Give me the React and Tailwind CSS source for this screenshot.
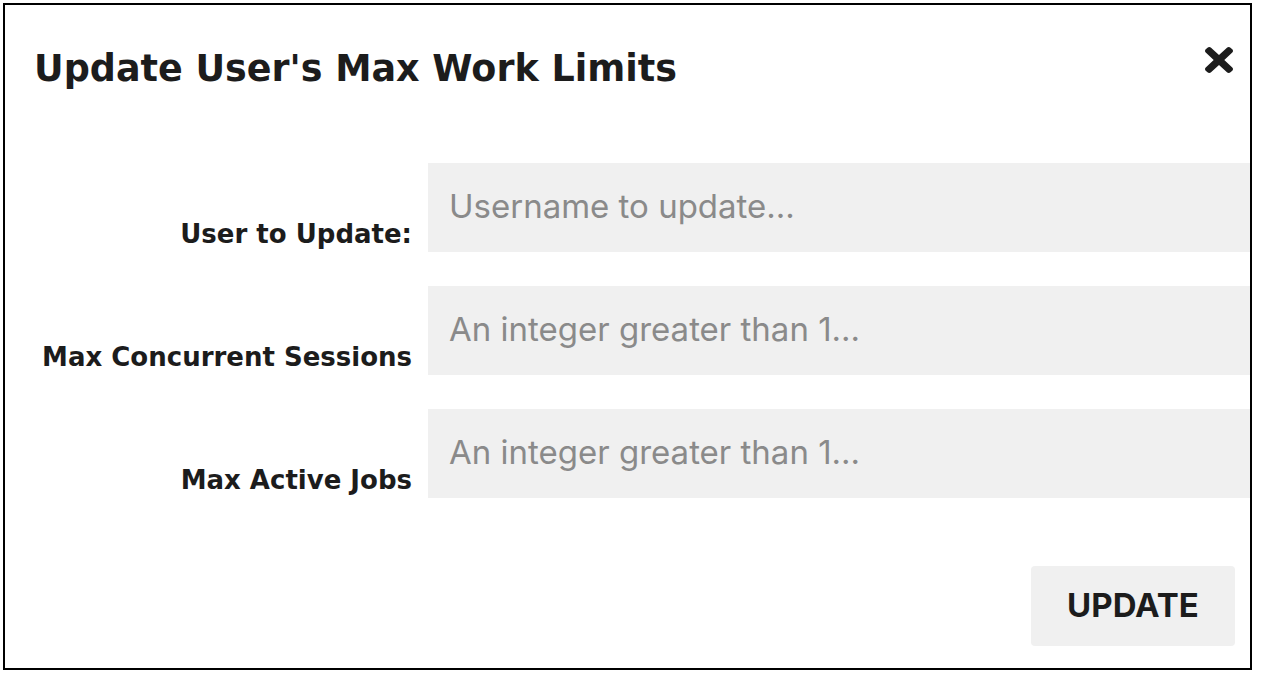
const fields = [
  { label: 'User to Update:', placeholder: 'Username to update...' },
  { label: 'Max Concurrent Sessions', placeholder: 'An integer greater than 1...' },
  { label: 'Max Active Jobs', placeholder: 'An integer greater than 1...' },
];

function CloseIcon() {
  return (
    <svg width="28" height="26" viewBox="0 80 352 352" preserveAspectRatio="none" fill="currentColor">
      <path d="M242.72 256l100.07-100.07c12.28-12.28 12.28-32.19 0-44.48l-22.24-22.24c-12.28-12.28-32.19-12.28-44.48 0L176 189.28 75.930 89.21c-12.28-12.28-32.19-12.28-44.48 0L9.21 111.45c-12.28 12.28-12.28 32.19 0 44.48L109.28 256 9.21 356.070c-12.28 12.28-12.28 32.19 0 44.48l22.24 22.24c12.28 12.28 32.2 12.28 44.48 0L176 322.72l100.07 100.07c12.28 12.28 32.2 12.28 44.48 0l22.24-22.24c12.28-12.28 12.280-32.19 0-44.48L242.72 256z" />
    </svg>
  );
}

export default function App() {
  return (
    <div className="bg-white w-[1268px] h-[680px] p-[3px]">
      <div className="w-[1249px] h-[667px] border-2 border-black flex flex-col">
        <div className="flex items-start justify-between pl-[29px] pr-[17px] pt-[42px]">
          <h2 className="font-['DejaVu_Sans',sans-serif] text-[36.5px] leading-[44px] font-bold text-[#1c1c1c]">
            Update User's Max Work Limits
          </h2>
          <button type="button" className="mt-0 text-[#1c1c1c]" aria-label="Close">
            <CloseIcon />
          </button>
        </div>

        <form className="flex flex-col gap-[34px] mt-[72px]">
          {fields.map((f) => (
            <div key={f.label} className="flex items-end">
              <label className="w-[423px] shrink-0 text-right pr-[16px] pb-[3px] font-['DejaVu_Sans',sans-serif] text-[26px] leading-[30px] font-bold text-[#1c1c1c]">
                {f.label}
              </label>
              <input
                type="text"
                placeholder={f.placeholder}
                className="flex-1 min-w-0 h-[89px] bg-[#f0f0f0] pl-[21px] pr-4 pb-[3px] font-['Inter',sans-serif] text-[33px] text-[#333] placeholder:text-[#8a8a8a] outline-none"
              />
            </div>
          ))}
        </form>

        <div className="flex justify-end pr-[15px] mt-[68px]">
          <button
            type="button"
            className="w-[204px] h-[80px] bg-[#f0f0f0] rounded-[4px] font-['Inter',sans-serif] text-[33px] font-bold text-[#1c1c1c]"
          >
            UPDATE
          </button>
        </div>
      </div>
    </div>
  );
}
